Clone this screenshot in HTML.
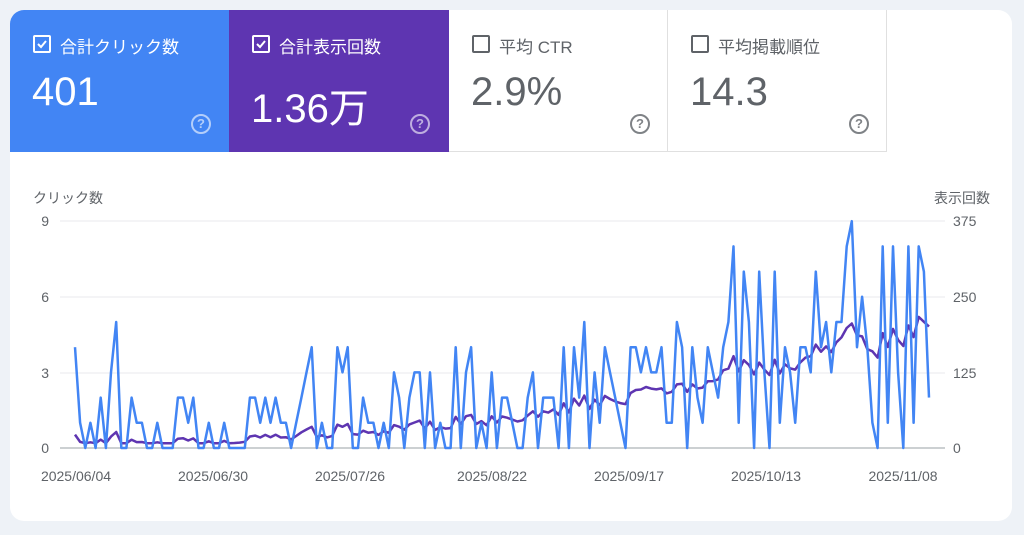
<!DOCTYPE html>
<html><head><meta charset="utf-8"><style>
body{margin:0;width:1024px;height:535px;background:#eef2f7;font-family:"Liberation Sans","Noto Sans CJK JP",sans-serif;overflow:hidden;position:relative}
.card{position:absolute;left:10px;top:10px;width:1002px;height:511px;background:#fff;border-radius:14px;overflow:hidden}
.tile{position:absolute;top:0;height:142px;width:219px;box-sizing:border-box}
.t1{left:0;background:#4285f4;color:#fff}
.t2{left:219px;width:220px;background:#5e35b1;color:#fff}
.t3{left:439px;width:219px;border-right:1px solid #e0e0e0;border-bottom:1px solid #e0e0e0;color:#5f6368}
.t4{left:658px;width:219px;border-right:1px solid #e0e0e0;border-bottom:1px solid #e0e0e0;color:#5f6368}
.lab{position:absolute;left:50px;top:23px;font-size:17px}
.cb{position:absolute;left:23px;top:25px;width:14px;height:14px;border:2px solid currentColor;border-radius:2px}
.num{position:absolute;left:22px;top:60px;font-size:40px}
.t2 .num{top:66px}
.q{position:absolute;left:181px;top:104px;width:16px;height:16px;border:2px solid currentColor;border-radius:50%;font-size:13px;font-weight:bold;text-align:center;line-height:16px;opacity:.6}
.t3 .q,.t4 .q{opacity:.8}
svg text{font-family:"Liberation Sans","Noto Sans CJK JP",sans-serif;fill:#5f6368;font-size:14px}
</style></head><body>
<div class="card">
<div class="tile t1"><div class="cb"><svg width="14" height="14" style="position:absolute;left:0;top:0"><path d="M3 7l3 3 5-6" stroke="#fff" stroke-width="2" fill="none"/></svg></div><div class="lab">合計クリック数</div><div class="num">401</div><div class="q">?</div></div>
<div class="tile t2"><div class="cb"><svg width="14" height="14" style="position:absolute;left:0;top:0"><path d="M3 7l3 3 5-6" stroke="#fff" stroke-width="2" fill="none"/></svg></div><div class="lab">合計表示回数</div><div class="num">1.36万</div><div class="q">?</div></div>
<div class="tile t3"><div class="cb"></div><div class="lab">平均 CTR</div><div class="num">2.9%</div><div class="q">?</div></div>
<div class="tile t4"><div class="cb"></div><div class="lab">平均掲載順位</div><div class="num">14.3</div><div class="q">?</div></div>
</div>
<svg id="ch" width="1024" height="535" style="position:absolute;left:0;top:0">
<text x="33" y="203">クリック数</text>
<text x="990" y="203" text-anchor="end">表示回数</text>
<line x1="60" x2="945" y1="221" y2="221" stroke="#e8eaed"/>
<line x1="60" x2="945" y1="297" y2="297" stroke="#e8eaed"/>
<line x1="60" x2="945" y1="373" y2="373" stroke="#e8eaed"/>
<line x1="60" x2="945" y1="448" y2="448" stroke="#9aa0a6"/>
<text x="49" y="226" text-anchor="end">9</text><text x="49" y="302" text-anchor="end">6</text><text x="49" y="378" text-anchor="end">3</text><text x="49" y="453" text-anchor="end">0</text>
<text x="953" y="226">375</text><text x="953" y="302">250</text><text x="953" y="378">125</text><text x="953" y="453">0</text>
<text x="76" y="481" text-anchor="middle">2025/06/04</text>
<text x="213" y="481" text-anchor="middle">2025/06/30</text>
<text x="350" y="481" text-anchor="middle">2025/07/26</text>
<text x="492" y="481" text-anchor="middle">2025/08/22</text>
<text x="629" y="481" text-anchor="middle">2025/09/17</text>
<text x="766" y="481" text-anchor="middle">2025/10/13</text>
<text x="903" y="481" text-anchor="middle">2025/11/08</text>
<polyline id="pp" fill="none" stroke="#5e35b1" stroke-width="2.5" stroke-linejoin="round"/>
<polyline id="bp" fill="none" stroke="#4285f4" stroke-width="2.5" stroke-linejoin="round"/>
</svg>
<script>
var b=[4,1,0,1,0,2,0,3,5,0,0,2,1,1,0,0,1,0,0,0,2,2,1,2,0,0,1,0,0,1,0,0,0,0,2,2,1,2,1,2,1,1,0,1,2,3,4,0,1,0,0,4,3,4,0,0,2,1,1,0,1,0,3,2,0,2,3,3,0,3,0,1,0,0,4,0,3,4,0,1,0,3,0,2,2,1,0,0,2,3,0,2,2,2,0,4,0,4,2,5,0,3,1,4,3,2,1,0,4,4,3,4,3,3,4,1,1,5,4,0,4,2,1,4,3,2,4,5,8,1,7,5,0,7,3,0,7,1,4,3,1,4,4,3,7,4,5,3,5,5,8,9,4,6,4,1,0,8,1,8,3,0,8,1,8,7,2];
var n=b.length,x0=75,x1=929,bs=[],ps=[],sm=[];
for(var i=0;i<n;i++){var s=0,c=0;for(var k=-2;k<=2;k++){if(b[i+k]!==undefined){s+=b[i+k];c++;}}sm.push(s/c);}
for(var i=0;i<n;i++){var x=x0+(x1-x0)*i/(n-1);bs.push(x.toFixed(1)+","+(448-25.2*b[i]).toFixed(1));
var t=i/(n-1),v=12+150*t*t+8*(sm[i]-1.5)*(0.6+t)+4*(b[i]-sm[i]);if(v<8)v=8;ps.push(x.toFixed(1)+","+(448-v*227/375).toFixed(1));}
document.getElementById("bp").setAttribute("points",bs.join(" "));
document.getElementById("pp").setAttribute("points",ps.join(" "));
</script>
</body></html>
